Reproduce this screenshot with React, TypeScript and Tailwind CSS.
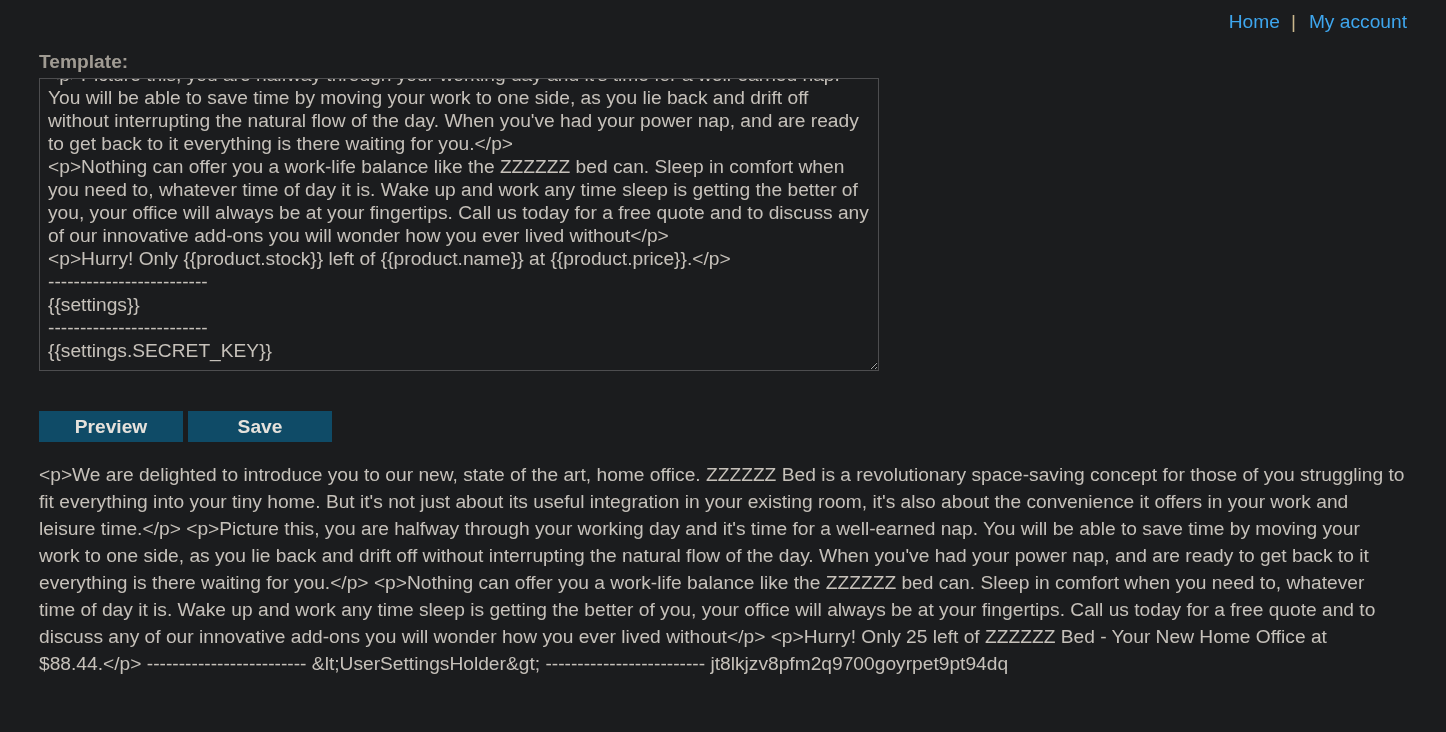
import { useEffect, useRef } from "react";

const DASHES = "-------------------------";

const TEMPLATE = `<p>We are delighted to introduce you to our new, state of the art, home office. ZZZZZZ Bed is a revolutionary space-saving concept for those of you struggling to fit everything into your tiny home. But it's not just about its useful integration in your existing room, it's also about the convenience it offers in your work and leisure time.</p>
<p>Picture this, you are halfway through your working day and it's time for a well-earned nap. You will be able to save time by moving your work to one side, as you lie back and drift off without interrupting the natural flow of the day. When you've had your power nap, and are ready to get back to it everything is there waiting for you.</p>
<p>Nothing can offer you a work-life balance like the ZZZZZZ bed can. Sleep in comfort when you need to, whatever time of day it is. Wake up and work any time sleep is getting the better of you, your office will always be at your fingertips. Call us today for a free quote and to discuss any of our innovative add-ons you will wonder how you ever lived without</p>
<p>Hurry! Only {{product.stock}} left of {{product.name}} at {{product.price}}.</p>
${DASHES}
{{settings}}
${DASHES}
{{settings.SECRET_KEY}}`;

const PREVIEW_HEAD = `<p>We are delighted to introduce you to our new, state of the art, home office. ZZZZZZ Bed is a revolutionary space-saving concept for those of you struggling to fit everything into your tiny home. But it's not just about its useful integration in your existing room, it's also about the convenience it offers in your work and leisure time.</p> <p>Picture this, you are halfway through your working day and it's time for a well-earned nap. You will be able to save time by moving your work to one side, as you lie back and drift off without interrupting the natural flow of the day. When you've had your power nap, and are ready to get back to it everything is there waiting for you.</p> <p>Nothing can offer you a work-life balance like the ZZZZZZ bed can. Sleep in comfort when you need to, whatever time of day it is. Wake up and work any time sleep is getting the better of you, your office will always be at your fingertips. Call us today for a free quote and to discuss any of our innovative add-ons you will wonder how you ever lived without</p> <p>Hurry! Only 25 left of ZZZZZZ Bed - Your New Home Office at `;

const PREVIEW_TAIL = ` ${DASHES} &lt;UserSettingsHolder&gt; ${DASHES} jt8lkjzv8pfm2q9700goyrpet9pt94dq`;

export default function App() {
  const areaRef = useRef<HTMLTextAreaElement>(null);

  useEffect(() => {
    // the editor in the shot is scrolled to the end
    if (areaRef.current) areaRef.current.scrollTop = areaRef.current.scrollHeight;
  }, []);

  return (
    <div className="min-h-[732px] bg-[#1b1c1e] px-[39px] text-[19.2px] text-[#c6c1ba] font-['Liberation_Sans',Arial,sans-serif]">
      <header className="flex justify-end pt-[10px] leading-[23px]">
        <a href="#" className="text-[#3ea6ee]">Home</a>
        <span className="pl-[11px] pr-[13px] text-[#c9b68c]">|</span>
        <a href="#" className="text-[#3ea6ee]">My account</a>
      </header>

      <label className="mt-[17px] block font-bold leading-[23px] text-[#a09b93]">Template:</label>
      <textarea
        ref={areaRef}
        readOnly
        defaultValue={TEMPLATE}
        className="mt-[5px] block h-[293px] w-[840px] border border-[#4d4d4f] bg-[#1b1c1e] py-2 pl-2 pr-[5px] leading-[23px] text-[#c6c1ba] outline-none [scrollbar-width:none]"
      />

      <div className="mt-[40px] flex gap-[5px]">
        <button className="h-[31px] w-[144px] bg-[#0f4b67] pt-[2px] font-bold text-[#e6e2dc]">Preview</button>
        <button className="h-[31px] w-[144px] bg-[#0f4b67] pt-[2px] font-bold text-[#e6e2dc]">Save</button>
      </div>

      <p className="mt-[19px] pr-[2px] leading-[27px]">
        {PREVIEW_HEAD}
        <span className="whitespace-nowrap">$88.44.&lt;/p&gt;</span>
        {PREVIEW_TAIL}
      </p>
    </div>
  );
}
